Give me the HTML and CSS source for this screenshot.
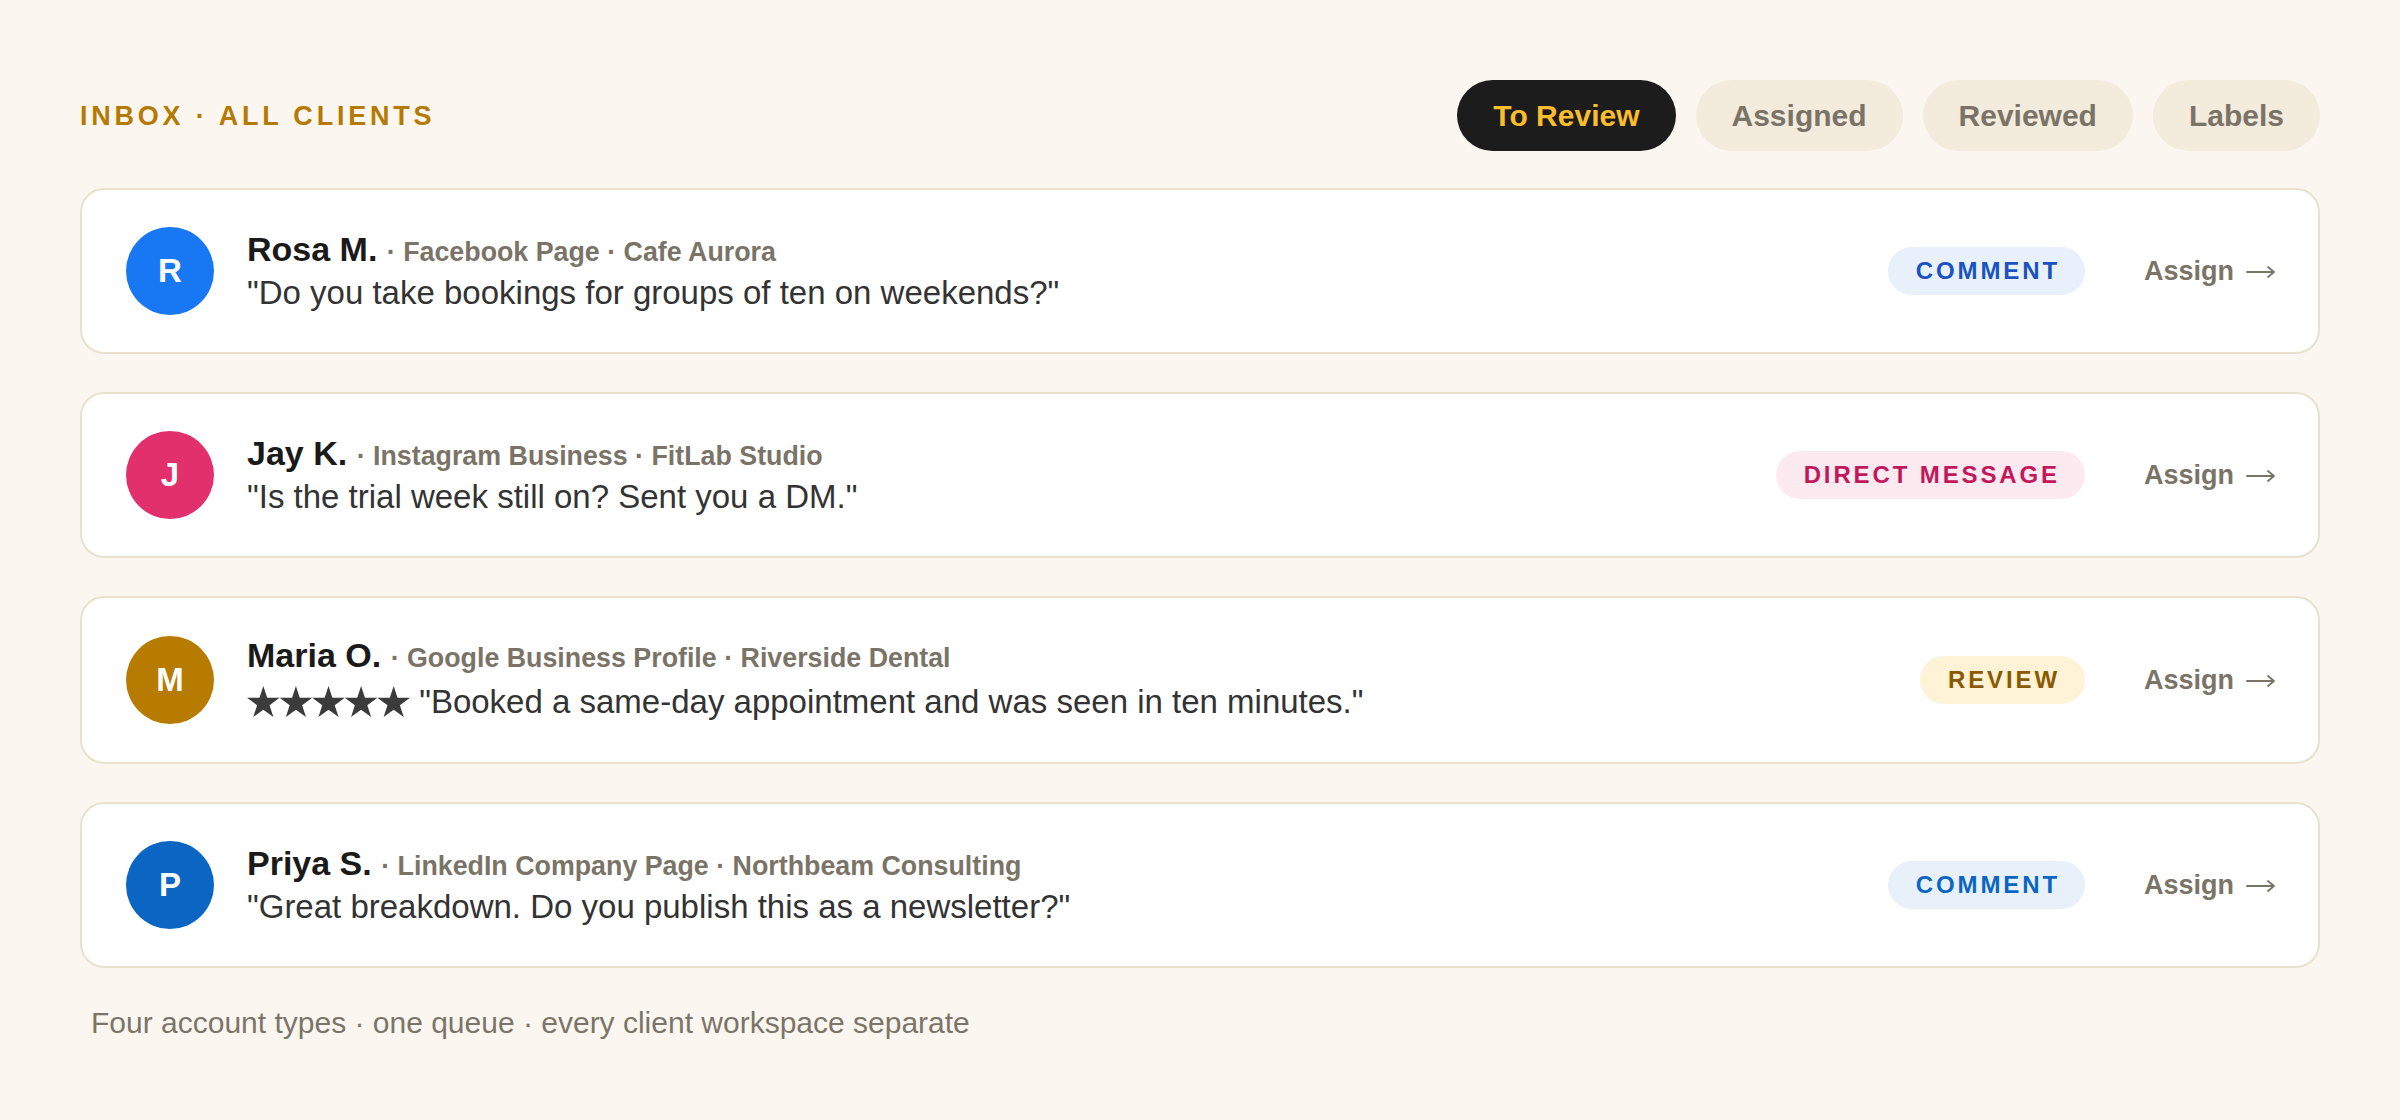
FILE: index.html
```html
<!DOCTYPE html>
<html lang="en">
<head>
<meta charset="utf-8">
<title>Inbox · All clients</title>
<link rel="stylesheet" href="styles.css">
</head>
<body>
<main class="inbox">
  <header class="topbar">
    <h1 class="title">INBOX · ALL CLIENTS</h1>
    <nav class="tabs">
      <button class="tab tab-active">To Review</button>
      <button class="tab">Assigned</button>
      <button class="tab">Reviewed</button>
      <button class="tab">Labels</button>
    </nav>
  </header>

  <ul class="list">
    <li class="card">
      <div class="avatar av-fb">R</div>
      <div class="body">
        <div class="who"><span class="name">Rosa M.</span> <span class="meta">· Facebook Page · Cafe Aurora</span></div>
        <div class="msg">"Do you take bookings for groups of ten on weekends?"</div>
      </div>
      <span class="pill pill-fb">COMMENT</span>
      <a class="assign" href="#">Assign<svg class="arrow" viewBox="0 0 30 14" aria-hidden="true"><path d="M1 7H28M22 2L28 7L22 12"/></svg></a>
    </li>
    <li class="card">
      <div class="avatar av-ig">J</div>
      <div class="body">
        <div class="who"><span class="name">Jay K.</span> <span class="meta">· Instagram Business · FitLab Studio</span></div>
        <div class="msg">"Is the trial week still on? Sent you a DM."</div>
      </div>
      <span class="pill pill-dm">DIRECT MESSAGE</span>
      <a class="assign" href="#">Assign<svg class="arrow" viewBox="0 0 30 14" aria-hidden="true"><path d="M1 7H28M22 2L28 7L22 12"/></svg></a>
    </li>
    <li class="card">
      <div class="avatar av-g">M</div>
      <div class="body">
        <div class="who"><span class="name">Maria O.</span> <span class="meta">· Google Business Profile · Riverside Dental</span></div>
        <div class="msg msg-rated"><svg class="stars" viewBox="0 0 120 22.83" role="img" aria-label="5 stars"><g id="st"><polygon points="12,0 14.83,8.72 24,8.72 16.58,14.11 19.42,22.83 12,17.44 4.58,22.83 7.42,14.11 0,8.72 9.17,8.72"/></g><use href="#st" x="24"/><use href="#st" x="48"/><use href="#st" x="72"/><use href="#st" x="96"/></svg> "Booked a same-day appointment and was seen in ten minutes."</div>
      </div>
      <span class="pill pill-rv">REVIEW</span>
      <a class="assign" href="#">Assign<svg class="arrow" viewBox="0 0 30 14" aria-hidden="true"><path d="M1 7H28M22 2L28 7L22 12"/></svg></a>
    </li>
    <li class="card">
      <div class="avatar av-li">P</div>
      <div class="body">
        <div class="who"><span class="name">Priya S.</span> <span class="meta">· LinkedIn Company Page · Northbeam Consulting</span></div>
        <div class="msg">"Great breakdown. Do you publish this as a newsletter?"</div>
      </div>
      <span class="pill pill-li">COMMENT</span>
      <a class="assign" href="#">Assign<svg class="arrow" viewBox="0 0 30 14" aria-hidden="true"><path d="M1 7H28M22 2L28 7L22 12"/></svg></a>
    </li>
  </ul>

  <p class="foot">Four account types · one queue · every client workspace separate</p>
</main>
</body>
</html>
```

FILE: styles.css
```css
* { box-sizing: border-box; }

html, body {
  margin: 0;
  padding: 0;
  background: #fbf7f0;
}

body {
  font-family: "Liberation Sans", Arial, Helvetica, sans-serif;
  color: #333333;
}

.inbox {
  padding: 80px 80px 0 80px;
  display: flex;
  flex-direction: column;
  gap: 38px;
}

.topbar {
  display: flex;
  justify-content: space-between;
  align-items: center;
  margin-bottom: -1px;
}

.title {
  margin: 0;
  font-size: 27px;
  font-weight: 700;
  letter-spacing: 0.14em;
  color: #b57a03;
  line-height: 32px;
}

.tabs {
  display: flex;
  gap: 20px;
}

.tab {
  font-family: inherit;
  font-size: 30px;
  font-weight: 700;
  line-height: 35px;
  padding: 18px 36px;
  border: 0;
  border-radius: 999px;
  background: #f3ebdc;
  color: #7a7468;
  cursor: pointer;
}

.tab-active {
  background: #1c1c1c;
  color: #fbbd2b;
}

.list {
  list-style: none;
  margin: 0;
  padding: 0;
  display: flex;
  flex-direction: column;
  gap: 38px;
}

.card {
  display: flex;
  align-items: center;
  background: #ffffff;
  border: 2px solid #e9e0cd;
  border-radius: 24px;
  padding: 37px 42px 37px 44px;
}

.avatar {
  flex: 0 0 88px;
  width: 88px;
  height: 88px;
  border-radius: 50%;
  display: flex;
  align-items: center;
  justify-content: center;
  color: #ffffff;
  font-size: 33px;
  font-weight: 700;
}

.av-fb { background: #1877f2; }
.av-ig { background: #e1306c; }
.av-g  { background: #b77b00; }
.av-li { background: #0a66c2; }

.body {
  flex: 1 1 auto;
  margin-left: 33px;
  display: flex;
  flex-direction: column;
  gap: 4px;
}

.who {
  font-size: 34px;
  line-height: 40px;
  font-weight: 700;
  white-space: nowrap;
}

.name { color: #1a1a1a; }

.meta {
  font-size: 26.8px;
  line-height: 1;
  color: #7a7468;
}

.msg {
  font-size: 33px;
  line-height: 40px;
  color: #333333;
  white-space: nowrap;
}

.msg-rated {
  line-height: 46px;
}

.stars {
  width: 163px;
  height: 31px;
  vertical-align: -4px;
  fill: #3b3b3b;
}

.pill {
  font-size: 24px;
  font-weight: 700;
  letter-spacing: 0.12em;
  line-height: 28px;
  padding: 10px 25px 10px 28px;
  border-radius: 999px;
  white-space: nowrap;
}

.pill-fb { background: #e8f0fc; color: #1a52c2; }
.pill-dm { background: #fdeaf0; color: #c2185b; }
.pill-rv { background: #fef3d6; color: #8a5a00; }
.pill-li { background: #e8f0fa; color: #0a66c2; }

.assign {
  margin-left: 59px;
  display: inline-flex;
  align-items: center;
  gap: 12px;
  font-size: 27px;
  line-height: 32px;
  font-weight: 700;
  color: #7a7468;
  text-decoration: none;
  white-space: nowrap;
}

.arrow {
  width: 30px;
  height: 14px;
  margin-top: 2px;
  fill: none;
  stroke: #7a7468;
  stroke-width: 1.8;
  stroke-linecap: round;
  stroke-linejoin: round;
}

.foot {
  margin: 0;
  padding-left: 11px;
  font-size: 30px;
  color: #7b7569;
}
```
